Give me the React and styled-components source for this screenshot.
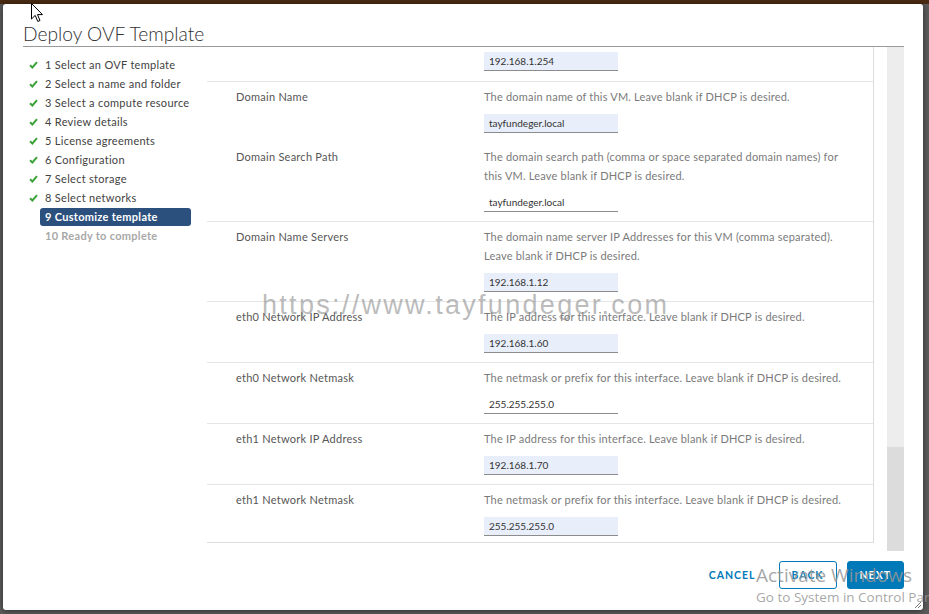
import React from "react";
import styled, { createGlobalStyle } from "styled-components";

const GlobalStyle = createGlobalStyle`
  html, body {
    margin: 0;
    height: 100%;
    overflow: hidden;
  }
  body {
    background: linear-gradient(#4a2a12 0 4px, #5c5c5c 4px);
    font-family: Lato, "Open Sans", sans-serif;
  }
`;

const Backdrop = styled.div`
  width: 929px;
  height: 614px;
  box-sizing: border-box;
  padding: 4px 6px 4px 3px;
  position: relative;
  overflow: hidden;
`;

const Modal = styled.div`
  width: 920px;
  height: 606px;
  box-sizing: border-box;
  background: #fff;
  border-radius: 3px;
  box-shadow: 0 1px 6px rgba(0, 0, 0, 0.5);
  padding: 0 19px 21px 20px;
  display: flex;
  flex-direction: column;
  position: relative;
`;

const Header = styled.div`
  height: 43px;
  display: flex;
  align-items: flex-end;
  border-bottom: 1px solid #9a9a9a;
  box-sizing: border-box;
  padding-bottom: 1px;
`;

const Title = styled.h1`
  margin: 0;
  font-family: Lato, sans-serif;
  font-weight: 300;
  font-size: 19.2px;
  line-height: 22px;
  color: #313131;
`;

const Body = styled.div`
  display: flex;
  height: 504px;
`;

const Sidebar = styled.ul`
  list-style: none;
  margin: 0;
  padding: 8px 0 0;
  width: 184px;
`;

const Step = styled.li`
  display: flex;
  align-items: center;
  height: 19px;
`;

const CheckCell = styled.span`
  width: 11px;
  padding-left: 6px;
  display: flex;
  align-items: center;
`;

const StepLabel = styled.span`
  width: 151px;
  height: 18px;
  box-sizing: border-box;
  padding: 0 5px;
  border-radius: 3px;
  display: flex;
  align-items: center;
  font-size: 11px;
  letter-spacing: 0.3px;
  font-weight: ${(p) => (p.$active || p.$pending ? 700 : 400)};
  color: ${(p) => (p.$active ? "#fff" : p.$pending ? "#a8a8a8" : "#424242")};
  background: ${(p) => (p.$active ? "#2c507d" : "transparent")};
  white-space: nowrap;
`;

const Content = styled.div`
  flex: 1;
  display: flex;
  align-items: flex-start;
`;

const Panel = styled.div`
  width: 667px;
  height: 496px;
  box-sizing: border-box;
  border-right: 1px solid #dcdcdc;
  border-bottom: 1px solid #dcdcdc;
  overflow: hidden;
`;

const Row = styled.div`
  display: grid;
  grid-template-columns: 248px 1fr;
  padding: ${(p) => (p.$partial ? "5px 0 10px 29px" : "5px 0 9px 29px")};
  border-bottom: ${(p) => (p.$divider ? "1px solid #e6e6e6" : "none")};
`;

const Label = styled.div`
  font-size: 11px;
  letter-spacing: 0.25px;
  line-height: 19px;
  color: #565656;
`;

const Field = styled.div`
  display: flex;
  flex-direction: column;
`;

const Desc = styled.div`
  font-size: 11px;
  letter-spacing: 0.2px;
  line-height: 19px;
  color: #7a7a7a;
  margin-bottom: 8px;
  white-space: nowrap;
`;

const Input = styled.div`
  width: 134px;
  height: 19px;
  box-sizing: border-box;
  padding: 0 5px;
  display: flex;
  align-items: center;
  background: ${(p) => (p.$filled ? "#e8eefa" : "#fff")};
  border-bottom: 1px solid #8c8c8c;
  font-size: 10px;
  color: #333;
`;

const ScrollTrack = styled.div`
  width: 17px;
  height: 504px;
  margin-left: 13px;
  background: #ededed;
  display: flex;
  flex-direction: column;
  justify-content: flex-end;
`;

const ScrollThumb = styled.div`
  height: 104px;
  background: #dcdcdc;
`;

const Footer = styled.div`
  display: flex;
  justify-content: flex-end;
  align-items: center;
  gap: 10px;
  padding-top: 10px;
`;

const Button = styled.button`
  height: 28px;
  min-width: 57px;
  box-sizing: border-box;
  padding: 0 12px;
  border-radius: 3px;
  font-family: Lato, sans-serif;
  font-weight: 700;
  font-size: 10.5px;
  letter-spacing: 1px;
  text-transform: uppercase;
  cursor: pointer;
  border: 1px solid ${(p) => (p.$variant === "flat" ? "transparent" : "#0079b8")};
  background: ${(p) => (p.$variant === "primary" ? "#0079b8" : "#fff")};
  color: ${(p) => (p.$variant === "primary" ? "#fff" : "#0079b8")};
`;

const Watermark = styled.div`
  position: absolute;
  left: 262px;
  top: 290px;
  font-family: "Liberation Sans", Arial, sans-serif;
  font-size: 27px;
  letter-spacing: 2.3px;
  color: rgba(130, 130, 130, 0.55);
  pointer-events: none;
  white-space: nowrap;
`;

const ActivateBox = styled.div`
  position: absolute;
  left: 756px;
  top: 562px;
  font-family: "Open Sans", sans-serif;
  color: rgba(150, 150, 150, 0.85);
  pointer-events: none;
  white-space: nowrap;
`;

const ActivateTitle = styled.div`
  font-size: 19px;
  line-height: 26px;
`;

const ActivateSub = styled.div`
  font-size: 13.5px;
  line-height: 18px;
`;

const Cursor = styled.svg`
  position: absolute;
  left: 31px;
  top: 3px;
`;

const Grip = styled.svg`
  position: absolute;
  right: 2px;
  bottom: 2px;
`;

const steps = [
  "1 Select an OVF template",
  "2 Select a name and folder",
  "3 Select a compute resource",
  "4 Review details",
  "5 License agreements",
  "6 Configuration",
  "7 Select storage",
  "8 Select networks",
  "9 Customize template",
  "10 Ready to complete",
];

const rows = [
  {
    label: "Domain Name",
    desc: ["The domain name of this VM. Leave blank if DHCP is desired."],
    value: "tayfundeger.local",
    filled: true,
  },
  {
    label: "Domain Search Path",
    desc: [
      "The domain search path (comma or space separated domain names) for",
      "this VM. Leave blank if DHCP is desired.",
    ],
    value: "tayfundeger.local",
    divider: true,
  },
  {
    label: "Domain Name Servers",
    desc: [
      "The domain name server IP Addresses for this VM (comma separated).",
      "Leave blank if DHCP is desired.",
    ],
    value: "192.168.1.12",
    filled: true,
    divider: true,
  },
  {
    label: "eth0 Network IP Address",
    desc: ["The IP address for this interface. Leave blank if DHCP is desired."],
    value: "192.168.1.60",
    filled: true,
    divider: true,
  },
  {
    label: "eth0 Network Netmask",
    desc: ["The netmask or prefix for this interface. Leave blank if DHCP is desired."],
    value: "255.255.255.0",
    divider: true,
  },
  {
    label: "eth1 Network IP Address",
    desc: ["The IP address for this interface. Leave blank if DHCP is desired."],
    value: "192.168.1.70",
    filled: true,
    divider: true,
  },
  {
    label: "eth1 Network Netmask",
    desc: ["The netmask or prefix for this interface. Leave blank if DHCP is desired."],
    value: "255.255.255.0",
    filled: true,
  },
];

function Check() {
  return (
    <svg width="9" height="8" viewBox="0 0 9 8">
      <path d="M1 4.2 L3.4 6.5 L8 1.2" fill="none" stroke="#3ea23a" strokeWidth="2" />
    </svg>
  );
}

export default function App() {
  return (
    <>
      <GlobalStyle />
      <Backdrop>
        <Modal>
          <Header>
            <Title>Deploy OVF Template</Title>
          </Header>
          <Body>
            <Sidebar>
              {steps.map((s, i) => (
                <Step key={s}>
                  <CheckCell>{i < 8 && <Check />}</CheckCell>
                  <StepLabel $active={i === 8} $pending={i === 9}>
                    {s}
                  </StepLabel>
                </Step>
              ))}
            </Sidebar>
            <Content>
              <Panel>
                <Row $partial $divider>
                  <Label />
                  <Field>
                    <Input $filled>192.168.1.254</Input>
                  </Field>
                </Row>
                {rows.map((r, i) => (
                  <Row key={i} $divider={r.divider}>
                    <Label>{r.label}</Label>
                    <Field>
                      <Desc>
                        {r.desc.map((line) => (
                          <div key={line}>{line}</div>
                        ))}
                      </Desc>
                      <Input $filled={r.filled}>{r.value}</Input>
                    </Field>
                  </Row>
                ))}
              </Panel>
              <ScrollTrack>
                <ScrollThumb />
              </ScrollTrack>
            </Content>
          </Body>
          <Footer>
            <Button $variant="flat">Cancel</Button>
            <Button>Back</Button>
            <Button $variant="primary">Next</Button>
          </Footer>
          <Grip width="6" height="6" viewBox="0 0 6 6">
            <path d="M6 0 L0 6 M6 3 L3 6" stroke="#777" strokeWidth="1" />
          </Grip>
        </Modal>
        <Watermark>https://www.tayfundeger.com</Watermark>
        <ActivateBox>
          <ActivateTitle>Activate Windows</ActivateTitle>
          <ActivateSub>Go to System in Control Panel to activate Windows.</ActivateSub>
        </ActivateBox>
        <Cursor width="12" height="20" viewBox="0 0 12 20">
          <path
            d="M0.5 0.5 L0.5 16 L4.2 12.4 L6.8 18.5 L9 17.5 L6.5 11.6 L11.5 11.6 Z"
            fill="#fff"
            stroke="#000"
            strokeWidth="1"
          />
        </Cursor>
      </Backdrop>
    </>
  );
}
